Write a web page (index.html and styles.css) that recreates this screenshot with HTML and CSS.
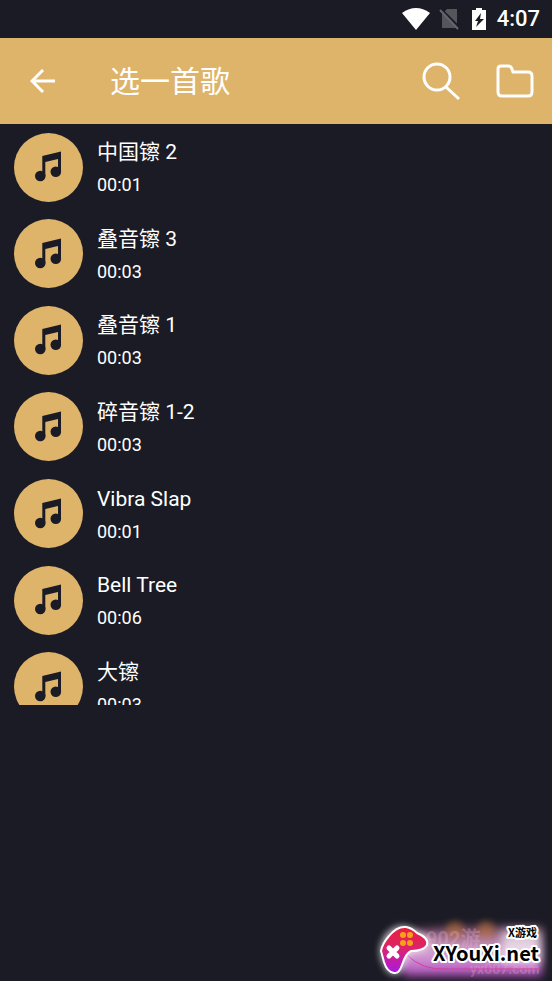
FILE: index.html
```html
<!DOCTYPE html>
<html lang="zh-CN">
<head>
<meta charset="utf-8">
<meta name="viewport" content="width=device-width, initial-scale=1">
<title>选一首歌</title>
<link rel="stylesheet" href="styles.css">
</head>
<body>
<svg class="defs" aria-hidden="true">
  <symbol id="note" viewBox="0 0 28 32">
    <path d="M7.300 5 26 .5V21H23V8L10.300 11V25H7.300Z"/>
    <circle cx="5.300" cy="25" r="5.300"/>
    <circle cx="20.800" cy="20.800" r="5.300"/>
  </symbol>
</svg>
<div class="status">
  <svg class="wifi" viewBox="0 0 28 22" aria-hidden="true"><path d="M0 5Q14-5 28 5L14 22Z" fill="#fff"/></svg>
  <svg class="sim" viewBox="0 0 20 22" aria-hidden="true"><path d="M8 1H18V20H3V6Z" fill="#55555c"/><path d="M2 1 20 19" stroke="#1b1b25" stroke-width="2"/><path d="M1 2 19 21" stroke="#65656b" stroke-width="2"/></svg>
  <svg class="battery" viewBox="0 0 16 22" aria-hidden="true"><path d="M5 0H11V2H15V22H1V2H5Z" fill="#fff"/><path d="M10 5 4 13H7L5 19 13 11H9Z" fill="#1b1b25"/></svg>
  <span class="clock">4:07</span>
</div>
<header class="bar">
  <button class="icon-button" aria-label="返回"><svg class="back" viewBox="0 0 26 26"><path d="M25 13H3M13 2 2 13 13 24"/></svg></button>
  <h1>选一首歌</h1>
  <button class="icon-button" aria-label="搜索"><svg class="search" viewBox="0 0 40 40"><circle cx="15" cy="16" r="13"/><path d="M24 26 37 38"/></svg></button>
  <button class="icon-button" aria-label="文件夹"><svg class="folder" viewBox="0 0 38 34"><path d="M2 5Q2 2 5 2H12Q15 2 16 5L17 8H32Q36 8 36 12V28Q36 32 32 32H6Q2 32 2 28Z"/></svg></button>
</header>
<main class="songs">
  <ul class="list">
    <li class="song"><span class="disc"><svg><use href="#note"/></svg></span><div><p class="name">中国镲 2</p><p class="time">00:01</p></div></li>
    <li class="song"><span class="disc"><svg><use href="#note"/></svg></span><div><p class="name">叠音镲 3</p><p class="time">00:03</p></div></li>
    <li class="song"><span class="disc"><svg><use href="#note"/></svg></span><div><p class="name">叠音镲 1</p><p class="time">00:03</p></div></li>
    <li class="song"><span class="disc"><svg><use href="#note"/></svg></span><div><p class="name">碎音镲 1-2</p><p class="time">00:03</p></div></li>
    <li class="song"><span class="disc"><svg><use href="#note"/></svg></span><div><p class="name">Vibra Slap</p><p class="time">00:01</p></div></li>
    <li class="song"><span class="disc"><svg><use href="#note"/></svg></span><div><p class="name">Bell Tree</p><p class="time">00:06</p></div></li>
    <li class="song"><span class="disc"><svg><use href="#note"/></svg></span><div><p class="name">大镲</p><p class="time">00:03</p></div></li>
  </ul>
</main>
<svg class="brand" viewBox="0 0 192 81" role="img" aria-label="X游戏 XYouXi.net">
  <defs>
    <linearGradient id="pad" x1="0" y1="0" x2="0" y2="1"><stop offset="0" stop-color="#e8203c"/><stop offset=".45" stop-color="#dc2468"/><stop offset="1" stop-color="#a818e8"/></linearGradient>
    <linearGradient id="haze" x1="0" y1="0" x2="0" y2="1"><stop offset="0" stop-color="#7c4a68"/><stop offset=".5" stop-color="#d8a8d4"/><stop offset="1" stop-color="#b04cc0"/></linearGradient>
    <filter id="soft" x="-20%" y="-40%" width="140%" height="180%"><feGaussianBlur stdDeviation="5"/></filter>
    <filter id="glow" x="-30%" y="-30%" width="160%" height="160%"><feGaussianBlur stdDeviation="3"/></filter>
  </defs>
  <path d="M28 36Q70 24 182 28V76H44Z" fill="url(#haze)" filter="url(#soft)"/>
  <path d="M142 30H180V64H142Z" fill="#fff" opacity=".6" filter="url(#soft)"/>
  <g fill="#c87838" opacity=".5" filter="url(#glow)"><circle cx="95" cy="30" r="9"/><circle cx="126" cy="30" r="9"/></g>
  <g class="ghost"><text x="66" y="46" font-size="20">902游</text><text x="110" y="74" font-size="14">yx007.com</text></g>
  <path d="M46 54Q62 71 88 69H180" fill="none" stroke="#d83c98" stroke-width="1"/>
  <path d="M22 48Q24 36 36 29Q45 25 56 33Q70 38 67 45Q64 50 50 51Q45 54 42 65Q37 76 30 71Q24 65 22 54Z" fill="#fff" stroke="#fff" stroke-width="5" opacity=".6" filter="url(#glow)"/>
  <path d="M21 51Q22 44 29 36Q37 26 46 27Q52 28 57 33Q69 38 67 45Q64 51 51 51Q46 53 42 65Q39 74 34 73Q27 72 24 62Z" fill="url(#pad)" stroke="#fff" stroke-width="2"/>
  <g fill="#f8a018"><circle cx="43" cy="35" r="3"/><circle cx="50" cy="35" r="3"/><circle cx="43" cy="43" r="3"/><circle cx="50" cy="43" r="3"/></g>
  <path d="M29 48 37 56M37 48 29 56" stroke="#fff" stroke-width="5" stroke-linecap="round"/>
  <text class="brand-name" x="73" y="61">XYouXi.net</text>
  <text class="brand-tag" x="148" y="37">X游戏</text>
</svg>
</body>
</html>
```
FILE: styles.css
```css
* { box-sizing: border-box; }
body {
  margin: 0;
  min-height: 100vh;
  background: #1b1b25;
  color: #fff;
  font-family: Roboto, "Noto Sans CJK SC", sans-serif;
  position: relative;
}
h1, p, ul { margin: 0; padding: 0; font-weight: 400; }
svg { display: block; }
.defs { position: absolute; width: 0; height: 0; }
.status {
  height: 38px;
  padding-right: 12px;
  display: flex;
  align-items: center;
  justify-content: flex-end;
}
.wifi { width: 28px; height: 22px; margin-right: 9px; }
.sim { width: 20px; height: 22px; margin-right: 12px; }
.battery { width: 16px; height: 22px; margin-right: 10px; }
.clock { font-size: 22px; line-height: 40px; font-weight: 500; }
.bar {
  height: 86px;
  padding: 0 18px 0 30px;
  display: flex;
  align-items: center;
  background: #deb36a;
}
.bar h1 { flex: 1; margin-left: 54px; padding-top: 2px; font-size: 30px; line-height: 44px; }
.icon-button { padding: 0; border: 0; background: none; color: #fff; }
.icon-button svg { fill: none; stroke: currentColor; stroke-width: 3; }
.back { width: 26px; height: 26px; }
.search { width: 40px; height: 40px; margin-right: 34px; }
.folder { width: 38px; height: 34px; }
.songs { height: 581px; overflow: hidden; }
.list { height: 606px; display: grid; grid-auto-rows: 1fr; list-style: none; }
.song { display: flex; align-items: center; gap: 14px; padding-left: 14px; }
.disc {
  width: 69px;
  height: 69px;
  border-radius: 50%;
  background: #deb36a;
  display: grid;
  place-items: center;
}
.disc svg { width: 28px; height: 32px; fill: #1b1b25; }
.name { padding-top: 2px; font-size: 21px; line-height: 34px; }
.time { font-size: 18px; line-height: 32px; }
.brand { position: absolute; right: 0; bottom: 0; width: 192px; height: 81px; }
.ghost { fill: #e8b0c8; opacity: .3; font-weight: 700; }
.brand-name, .brand-tag {
  fill: #000;
  stroke: #fff;
  stroke-width: 4px;
  stroke-linejoin: round;
  paint-order: stroke;
}
.brand-name { font: 700 20px "Noto Sans CJK SC", sans-serif; }
.brand-tag { font: 700 11px "Noto Sans CJK SC", sans-serif; }
```
